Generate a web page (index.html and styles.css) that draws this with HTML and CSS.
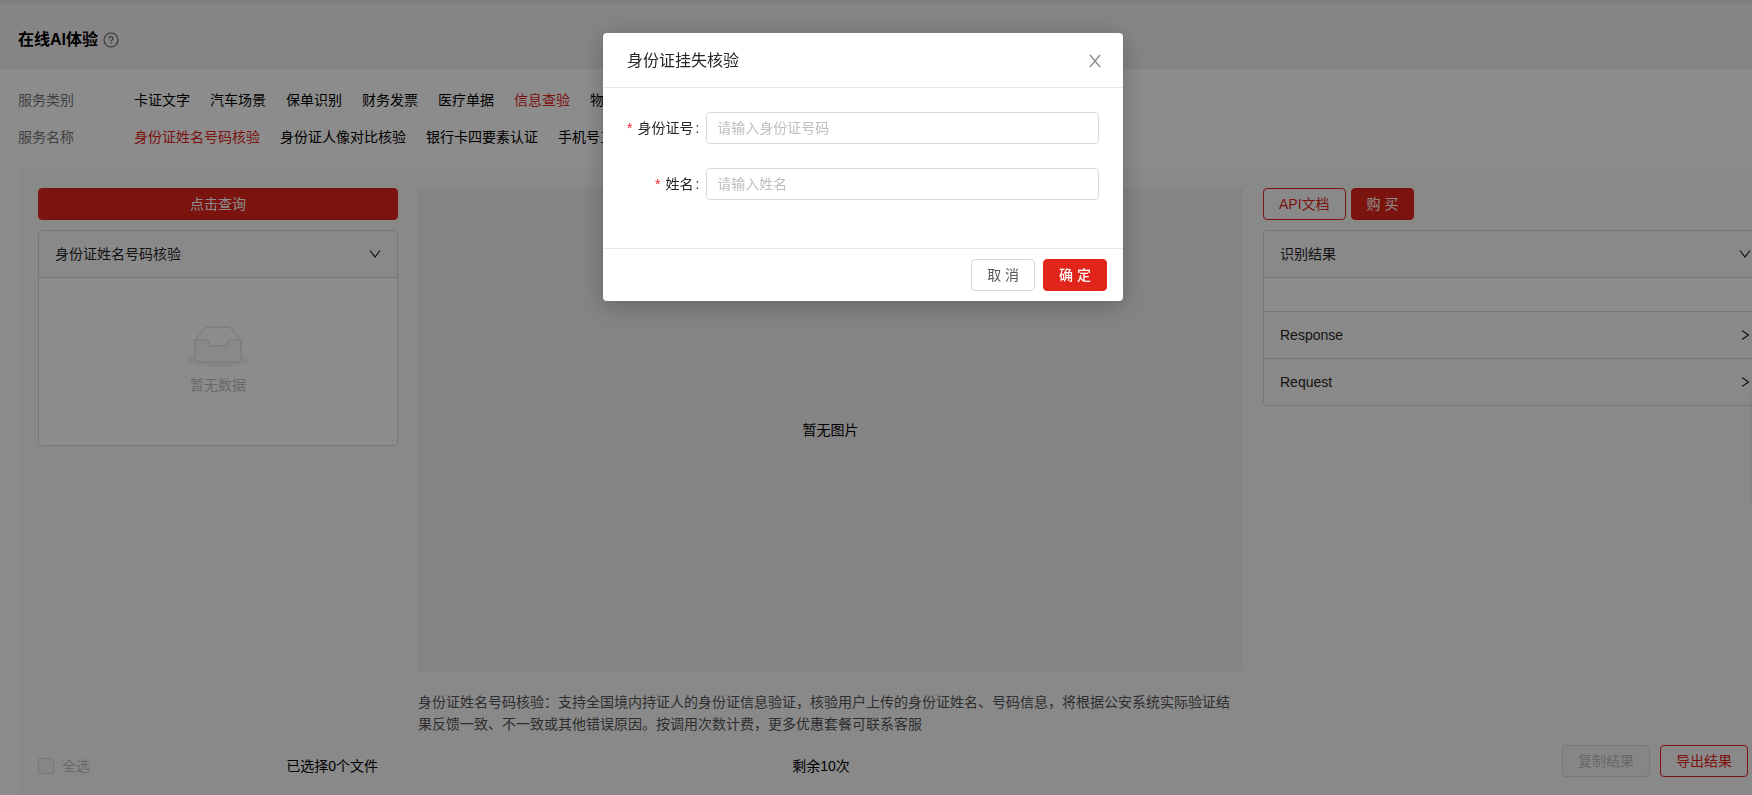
FILE: index.html
```
<!DOCTYPE html>
<html lang="zh-CN">
<head>
<meta charset="utf-8">
<title>在线AI体验</title>
<link rel="stylesheet" href="styles.css">
</head>
<body>
<div class="page">
  <header class="page-header">
    <h1>在线AI体验</h1>
    <svg class="help" viewBox="0 0 16 16" width="16" height="16" fill="none" stroke="currentColor" stroke-width="1.2"><circle cx="8" cy="8" r="7"/><path d="M6 6.500a2 2 0 1 1 2.900 1.800c-.6.3-.9.6-.9 1.200"/><path d="M8 10.800v1.200"/></svg>
  </header>

  <section class="filters">
    <div class="filter-row">
      <span class="filter-label">服务类别</span>
      <nav class="filter-items">
        <a href="#">卡证文字</a><a href="#">汽车场景</a><a href="#">保单识别</a><a href="#">财务发票</a><a href="#">医疗单据</a><a href="#" class="active">信息查验</a><a href="#">物流</a>
      </nav>
    </div>
    <div class="filter-row">
      <span class="filter-label">服务名称</span>
      <nav class="filter-items">
        <a href="#" class="active">身份证姓名号码核验</a><a href="#">身份证人像对比核验</a><a href="#">银行卡四要素认证</a><a href="#">手机号三</a>
      </nav>
    </div>
  </section>

  <main class="workspace">
    <div class="columns">
      <section class="col-left">
        <button class="btn primary block">点击查询</button>
        <div class="collapse">
          <button class="collapse-head">身份证姓名号码核验
            <svg viewBox="0 0 12 12" width="12" height="12" fill="none" stroke="currentColor" stroke-width="1.2"><path d="M1 2.500 6 9 11 2.500"/></svg>
          </button>
          <div class="collapse-body empty">
            <svg width="64" height="41" viewBox="0 0 64 41"><g transform="translate(0 1)" fill="none"><ellipse fill="#f5f5f5" cx="32" cy="33" rx="32" ry="7"/><g stroke="#d9d9d9"><path d="M55 12.76L44.854 1.258C44.367.474 43.656 0 42.907 0H21.093c-.749 0-1.46.474-1.947 1.257L9 12.761V22h46v-9.24z"/><path d="M41.613 15.931c0-1.605.994-2.93 2.227-2.931H55v18.137C55 33.26 53.68 35 52.05 35h-40.1C10.32 35 9 33.259 9 31.137V13h11.16c1.233 0 2.227 1.323 2.227 2.928v.022c0 1.605 1.005 2.901 2.237 2.901h14.752c1.232 0 2.237-1.308 2.237-2.913v-.007z" fill="#fafafa"/></g></g></svg>
            <p>暂无数据</p>
          </div>
        </div>
      </section>

      <section class="col-middle">
        <div class="preview">暂无图片</div>
        <p class="description">身份证姓名号码核验：支持全国境内持证人的身份证信息验证，核验用户上传的身份证姓名、号码信息，将根据公安系统实际验证结果反馈一致、不一致或其他错误原因。按调用次数计费，更多优惠套餐可联系客服</p>
      </section>

      <section class="col-right">
        <div class="actions">
          <button class="btn outline">API文档</button>
          <button class="btn primary">购 买</button>
        </div>
        <div class="collapse">
          <button class="collapse-head">识别结果
            <svg viewBox="0 0 12 12" width="12" height="12" fill="none" stroke="currentColor" stroke-width="1.2"><path d="M1 2.500 6 9 11 2.500"/></svg>
          </button>
          <div class="collapse-body"></div>
          <button class="collapse-head">Response
            <svg viewBox="0 0 12 12" width="12" height="12" fill="none" stroke="currentColor" stroke-width="1.2"><path d="M3 1.500 9.500 6 3 10.500"/></svg>
          </button>
          <button class="collapse-head">Request
            <svg viewBox="0 0 12 12" width="12" height="12" fill="none" stroke="currentColor" stroke-width="1.2"><path d="M3 1.500 9.500 6 3 10.500"/></svg>
          </button>
        </div>
      </section>
    </div>

    <footer class="bottom-bar">
      <div class="selection">
        <label class="check"><input type="checkbox" disabled>全选</label>
        <span>已选择0个文件</span>
      </div>
      <div class="remaining">剩余10次</div>
      <div class="exports">
        <button class="btn disabled" disabled>复制结果</button>
        <button class="btn outline">导出结果</button>
      </div>
    </footer>
  </main>
  <aside class="side-dock"></aside>
</div>

<div class="mask">
  <form class="modal" role="dialog" aria-labelledby="modal-title">
    <div class="modal-head">
      <h2 id="modal-title">身份证挂失核验</h2>
      <button type="button" class="close" aria-label="关闭"><svg viewBox="0 0 14 14" width="14" height="14" fill="none" stroke="currentColor" stroke-width="1.4"><path d="M2 1 12 13M12 1 2 13"/></svg></button>
    </div>
    <div class="modal-body">
      <label for="id-number"><i>*</i>身份证号<span class="colon">:</span></label>
      <input id="id-number" type="text" placeholder="请输入身份证号码">
      <label for="full-name"><i>*</i>姓名<span class="colon">:</span></label>
      <input id="full-name" type="text" placeholder="请输入姓名">
    </div>
    <div class="modal-foot">
      <button type="button" class="btn">取 消</button>
      <button type="button" class="btn primary confirm">确 定</button>
    </div>
  </form>
</div>
</body>
</html>
```
FILE: styles.css
```
* { box-sizing: border-box; }
html, body { height: 100%; }
body {
  margin: 0;
  overflow: hidden;
  background: #fff;
  color: #000;
  font: 14px/22px "Liberation Sans", "Noto Sans CJK SC", sans-serif;
}
h1, h2, p { margin: 0; }
a { color: inherit; text-decoration: none; }
button, input { font: inherit; }

.page { min-height: 100vh; display: flex; flex-direction: column; }

.page-header {
  display: flex;
  align-items: center;
  gap: 5px;
  height: 69px;
  padding: 10px 18px 0;
  background: #f4f0f1;
  box-shadow: inset 0 6px 6px -6px rgba(0, 0, 0, .15);
}
.page-header h1 { font-size: 16px; line-height: 24px; }
.help { color: #666; }

.filters { display: grid; gap: 15px; padding: 20px 18px; }
.filter-row { display: flex; }
.filter-label { flex: 0 0 116px; color: #777; }
.filter-items { display: flex; gap: 20px; white-space: nowrap; }
.active { color: #e1251b; }

.workspace {
  flex: 1;
  display: flex;
  flex-direction: column;
  justify-content: space-between;
  margin-left: 18px;
  padding: 20px 0 18px 20px;
  background: #fafafa;
}
.columns { display: grid; grid-template-columns: 360px 1fr 505px; gap: 20px; margin-right: -16px; }
.col-left, .col-right { display: flex; flex-direction: column; gap: 10px; }

.btn {
  height: 32px;
  padding: 0 15px;
  border: 1px solid #d9d9d9;
  border-radius: 4px;
  background: #fff;
  color: #595959;
  line-height: 20px;
  white-space: nowrap;
}
.btn.primary { background: #e1251b; border-color: #e1251b; color: #fff; }
.btn.outline { background: transparent; border-color: #e1251b; color: #e1251b; }
.btn.disabled { background: #f5f5f5; color: #bfbfbf; }
.btn.block { width: 100%; }
.btn.confirm { font-weight: 500; }
.actions { display: flex; gap: 5px; }

.collapse { border: 1px solid #d9d9d9; border-radius: 4px; overflow: hidden; }
.collapse-head {
  display: flex;
  align-items: center;
  justify-content: space-between;
  width: 100%;
  padding: 12px 16px;
  border: 0;
  background: #fafafa;
  color: #262626;
}
.collapse > * + * { border-top: 1px solid #d9d9d9; }
.collapse-body { min-height: 34px; background: #fff; }
.empty {
  display: flex;
  flex-direction: column;
  align-items: center;
  gap: 7px;
  padding: 48px 16px 49px;
  color: #bfbfbf;
}

.preview { display: grid; place-items: center; height: 483px; background: #f0f0f0; }
.description { margin-top: 20px; color: #555; text-spacing-trim: space-all; font-kerning: none; }

.bottom-bar {
  display: grid;
  grid-template-columns: 360px 1fr 504px;
  gap: 20px;
  align-items: end;
  padding-right: 4px;
}
.selection { display: flex; justify-content: space-between; padding-right: 20px; }
.check { display: flex; align-items: center; gap: 8px; color: #bfbfbf; }
.check input {
  appearance: none;
  width: 16px;
  height: 16px;
  margin: 0;
  border: 1px solid #d9d9d9;
  border-radius: 2px;
  background: #f5f5f5;
}
.remaining { text-align: center; }
.exports { display: flex; justify-content: flex-end; gap: 10px; }

.side-dock {
  position: fixed;
  top: 392px;
  left: 100%;
  width: 48px;
  height: 116px;
  box-shadow: 0 0 6px rgba(0, 0, 0, .1);
}

.mask {
  position: fixed;
  inset: 0;
  display: flex;
  justify-content: center;
  align-items: flex-start;
  padding: 33px 26px 0 0;
  background: rgba(0, 0, 0, .45);
}
.modal {
  width: 520px;
  border-radius: 4px;
  background: #fff;
  box-shadow: 0 4px 24px rgba(0, 0, 0, .25);
}
.modal-head {
  display: flex;
  align-items: center;
  justify-content: space-between;
  padding: 17px 21px 15px 24px;
  border-bottom: 1px solid #e8e8e8;
}
.modal-head h2 { color: #262626; font-size: 16px; line-height: 22px; font-weight: 400; }
.close { display: flex; padding: 0; border: 0; background: none; color: #8c8c8c; }
.modal-body {
  display: grid;
  grid-template-columns: max-content 1fr;
  align-items: center;
  gap: 24px 7px;
  padding: 24px 24px 48px;
}
.modal-body label { text-align: right; color: #262626; }
.modal-body i { margin-right: 5px; color: #f5222d; font-style: normal; }
.colon { margin-left: 2px; }
.modal-body input {
  width: 100%;
  height: 32px;
  padding: 4px 10px;
  border: 1px solid #d9d9d9;
  border-radius: 4px;
}
.modal-body input::placeholder { color: #bfbfbf; }
.modal-foot {
  display: flex;
  justify-content: flex-end;
  gap: 8px;
  padding: 10px 16px;
  border-top: 1px solid #e8e8e8;
}
```
